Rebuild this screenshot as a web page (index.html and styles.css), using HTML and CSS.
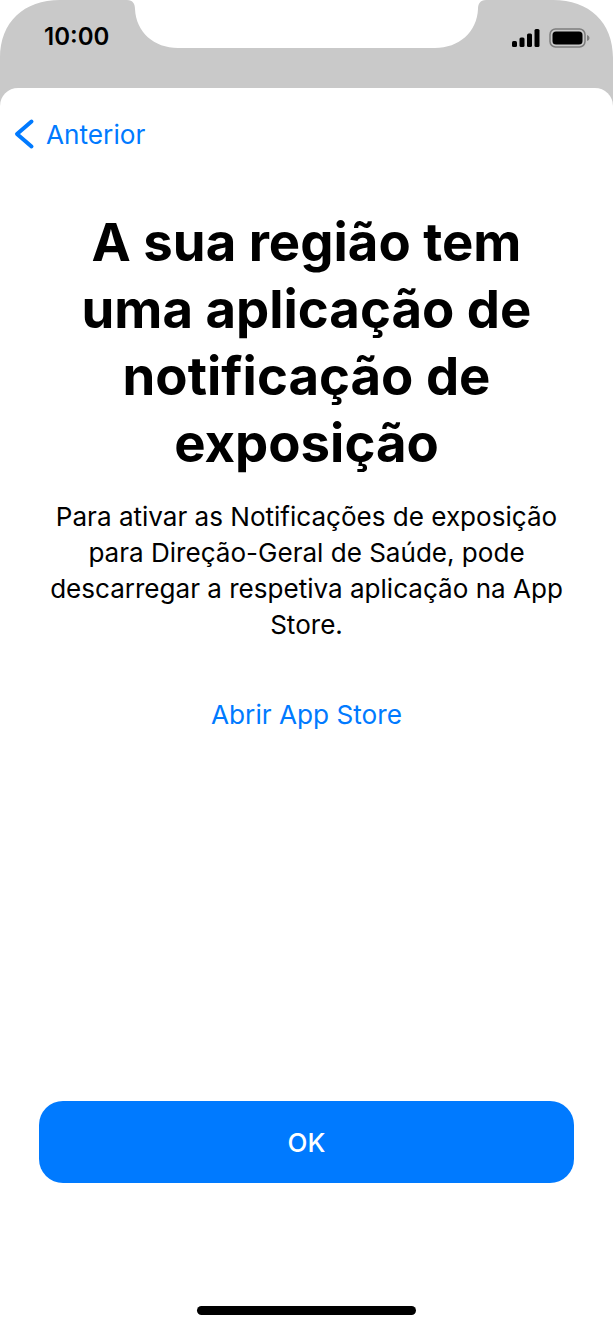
FILE: index.html
```html
<!DOCTYPE html>
<html lang="pt">
<head>
<meta charset="UTF-8">
<meta name="viewport" content="width=device-width, initial-scale=1.0">
<title>Notificações de exposição</title>
<link rel="stylesheet" href="styles.css">
</head>
<body>
<div class="phone">
  <header class="status">
    <svg class="status-bg" width="613" height="110" viewBox="0 0 613 110">
      <path fill="#c9c9c9" d="M0 110V58C0 22 24 0 60 0H127C133 0 135 4 135 9C136 32 154 48 178 48H435C459 48 477 32 478 9C478 4 480 0 486 0H553C589 0 613 22 613 58V110Z"/>
    </svg>
    <span class="time">10:00</span>
    <div class="status-icons">
      <svg width="28" height="18" viewBox="0 0 28 18">
        <rect x="0" y="12" width="5" height="6" rx="1.5"/>
        <rect x="7.5" y="8.5" width="5" height="9.5" rx="1.5"/>
        <rect x="15" y="4.5" width="5" height="13.5" rx="1.5"/>
        <rect x="22.5" y="0" width="5" height="18" rx="1.5"/>
      </svg>
      <svg width="41" height="20" viewBox="0 0 41 20">
        <rect x="1" y="1" width="35" height="18" rx="5.5" fill="none" stroke="#7d7d7d" stroke-width="1.5"/>
        <rect x="3.5" y="3.5" width="30" height="13" rx="3.5"/>
        <path fill="#7d7d7d" d="M38 7C39.5 7.5 40.5 8.5 40.5 10S39.5 12.5 38 13Z"/>
      </svg>
    </div>
  </header>

  <main class="sheet">
    <a class="back">
      <svg width="22" height="32" viewBox="0 0 22 32">
        <path d="M18.5 3.5L4 16L18.5 28.5" fill="none" stroke="#007aff" stroke-width="4" stroke-linecap="round" stroke-linejoin="round"/>
      </svg>
      <span>Anterior</span>
    </a>

    <h1 class="title">A sua região tem uma aplicação de notificação de exposição</h1>
    <p class="text">Para ativar as Notificações de exposição para Direção-Geral de Saúde, pode descarregar a respetiva aplicação na App Store.</p>
    <a class="link">Abrir App Store</a>

    <button class="ok">OK</button>
    <div class="home-bar"></div>
  </main>
</div>
</body>
</html>
```

FILE: styles.css
```css
body {
  margin: 0;
  background-color: white;
  font-family: Inter, "Liberation Sans", sans-serif;
  color: black;
}

.phone {
  width: 613px;
  height: 1328px;
  overflow: hidden;
  display: flex;
  flex-direction: column;
}

.status {
  position: relative;
  height: 88px;
  flex: none;
  display: flex;
  justify-content: space-between;
  padding: 0 23px 0 44px;
}

.status-bg {
  position: absolute;
  left: 0;
  top: 0;
}

.time {
  position: relative;
  margin-top: 22px;
  font-size: 24px;
  line-height: 30px;
  font-weight: 600;
}

.status-icons {
  position: relative;
  margin-top: 28px;
  height: 20px;
  display: flex;
  align-items: center;
  gap: 9px;
}

.sheet {
  position: relative;
  flex: 1;
  background-color: white;
  border-radius: 18px 18px 0 0;
  display: flex;
  flex-direction: column;
  align-items: center;
}

.back {
  align-self: flex-start;
  display: flex;
  align-items: center;
  gap: 11px;
  margin: 30px 0 0 13px;
  height: 32px;
  color: #007aff;
  font-size: 26.2px;
}

.title {
  margin: 59px 0 0;
  width: 500px;
  text-align: center;
  font-size: 52.7px;
  line-height: 67px;
  font-weight: 700;
}

.text {
  margin: 22px 0 0;
  width: 530px;
  text-align: center;
  font-size: 26.05px;
  line-height: 36px;
}

.link {
  margin-top: 54px;
  color: #007aff;
  font-size: 26.2px;
  line-height: 36px;
}

.ok {
  margin-top: 368px;
  width: 535px;
  height: 82px;
  flex: none;
  border: 0;
  border-radius: 24px;
  background-color: #007aff;
  color: white;
  font-family: inherit;
  font-size: 26px;
  font-weight: 500;
}

.home-bar {
  margin-top: 123px;
  width: 219px;
  height: 9px;
  flex: none;
  border-radius: 5px;
  background-color: black;
}
```
